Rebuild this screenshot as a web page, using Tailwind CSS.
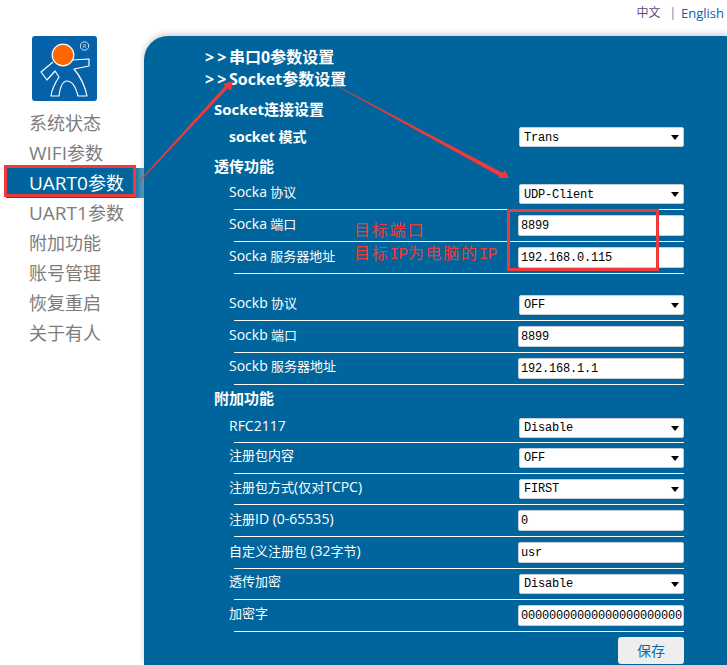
<!DOCTYPE html>
<html lang="zh">
<head>
    <meta charset="UTF-8">
    <title>UART0</title>
    <script src="https://cdn.jsdelivr.net/npm/@tailwindcss/browser@4"></script>
</head>
<body class="bg-white overflow-hidden font-['Open_Sans','Noto_Sans_CJK_SC',sans-serif]">
<div class="relative w-[727px] h-[665px] overflow-hidden">

    <!-- language links -->
    <div class="h-[36px] flex justify-end items-start pt-[5px] pr-[3px] text-[12px] leading-[16px] text-[#0f5fa8]">
        <span class="text-[#5b4a7a]">中文</span>
        <span class="ml-[9px] mr-[5px] text-[#5b7fb0]">|</span>
        <span class="text-[13px]">English</span>
    </div>

    <div class="flex">
        <!-- sidebar -->
        <div class="w-[144px] shrink-0">
            <div class="ml-[32px] w-[65px] h-[65px] rounded-[3px] bg-[#0561a8]">
                <svg viewBox="0 0 65 65" class="w-[65px] h-[65px]" fill="none">
                    <path d="M21 26 L9 36 L15 44 L23 35 L27 41 C23 47 20 52 19 60 L27 60 C28 52 30 45 35 45 C41 45 44 52 46 60 L55 60 C53 50 48 40 42 33 L57 30 L57 23 L40 24" stroke="#fff" stroke-width="1.2" stroke-linejoin="round"/>
                    <circle cx="31" cy="19" r="10.8" fill="#ff6600" stroke="#fff" stroke-width="1.2"/>
                    <circle cx="52.5" cy="10" r="4.2" stroke="#d5e6f5" stroke-width="1"/>
                    <text x="52.5" y="12" font-size="5.5" fill="#d5e6f5" text-anchor="middle">R</text>
                </svg>
            </div>
            <nav class="mt-[7px] text-[18px] leading-[30px] text-[#7d7d7d]">
                <div class="h-[30px] pl-[29px]">系统状态</div>
                <div class="h-[30px] pl-[29px]"><span class="text-[19px]">WIFI</span>参数</div>
                <div class="h-[30px] ml-[6px] pl-[23px] text-white bg-gradient-to-r from-[#00659c] from-[92%] to-[#00659c]/60"><span class="text-[19px]">UART0</span>参数</div>
                <div class="h-[30px] pl-[29px]"><span class="text-[19px]">UART1</span>参数</div>
                <div class="h-[30px] pl-[29px]">附加功能</div>
                <div class="h-[30px] pl-[29px]">账号管理</div>
                <div class="h-[30px] pl-[29px]">恢复重启</div>
                <div class="h-[30px] pl-[29px]">关于有人</div>
            </nav>
        </div>

        <!-- main panel -->
        <div class="w-[583px] h-[629px] bg-[#00659c] rounded-tl-[24px] shadow-[0_-2px_6px_rgba(0,0,0,0.2)] text-white text-[13px] pt-[10px]">
            <div class="pl-[61px] text-[16px] font-bold leading-[23px]">
                <div class="flex h-[22px]"><span class="w-[24px] tracking-[3px]">&gt;&gt;</span>串口0参数设置</div>
                <div class="flex h-[24px]"><span class="w-[24px] tracking-[3px]">&gt;&gt;</span>Socket参数设置</div>
            </div>

            <div class="ml-[70px] mt-[7px] h-[24px] leading-[21px] text-[15px] font-bold">Socket连接设置</div>
            <div class="ml-[90px] w-[450px] h-[28px] flex items-center justify-between">
                <span class="-ml-[5px] -mt-[2px] text-[14px] font-bold">socket 模式</span>
                <div class="relative w-[165px] h-[20px] rounded-[2px] bg-white border border-[#c8ced4] pl-[4px] font-['Liberation_Mono',monospace] text-[12px] leading-[21px] tracking-[-0.2px] text-black">Trans<span class="absolute right-[4px] top-[7px] border-x-[4px] border-t-[5px] border-x-transparent border-t-black"></span></div>
            </div>

            <div class="ml-[70px] mt-[4px] h-[23px] leading-[23px] text-[15px] font-bold">透传功能</div>
            <div class="ml-[90px] w-[450px] h-[32px] flex items-center justify-between border-b border-white">
                <span class="-ml-[5px] -mt-[3px]"><span class="text-[14px]">Socka</span> 协议</span>
                <div class="relative w-[165px] h-[20px] rounded-[2px] bg-white border border-[#c8ced4] pl-[4px] font-['Liberation_Mono',monospace] text-[12px] leading-[21px] tracking-[-0.2px] text-black">UDP-Client<span class="absolute right-[4px] top-[7px] border-x-[4px] border-t-[5px] border-x-transparent border-t-black"></span></div>
            </div>
            <div class="ml-[90px] w-[450px] h-[32px] flex items-center justify-between border-b border-white">
                <span class="-ml-[5px] -mt-[4px]"><span class="text-[14px]">Socka</span> 端口</span>
                <div class="w-[166px] h-[21px] rounded-[2px] bg-white border border-[#c8ced4] pl-[2px] font-['Liberation_Mono',monospace] text-[12px] leading-[21px] tracking-[-0.2px] text-black">8899</div>
            </div>
            <div class="ml-[90px] w-[450px] h-[32px] flex items-center justify-between border-b border-white">
                <span class="-ml-[5px] -mt-[4px]"><span class="text-[14px]">Socka</span> 服务器地址</span>
                <div class="w-[166px] h-[21px] rounded-[2px] bg-white border border-[#c8ced4] pl-[2px] font-['Liberation_Mono',monospace] text-[12px] leading-[21px] tracking-[-0.2px] text-black">192.168.0.115</div>
            </div>

            <div class="h-[15px]"></div>
            <div class="ml-[90px] w-[450px] h-[32px] flex items-center justify-between border-b border-white">
                <span class="-ml-[5px] -mt-[4px]"><span class="text-[14px]">Sockb</span> 协议</span>
                <div class="relative w-[165px] h-[20px] rounded-[2px] bg-white border border-[#c8ced4] pl-[4px] font-['Liberation_Mono',monospace] text-[12px] leading-[19px] tracking-[-0.2px] text-black">OFF<span class="absolute right-[4px] top-[7px] border-x-[4px] border-t-[5px] border-x-transparent border-t-black"></span></div>
            </div>
            <div class="ml-[90px] w-[450px] h-[32px] flex items-center justify-between border-b border-white">
                <span class="-ml-[5px] -mt-[4px]"><span class="text-[14px]">Sockb</span> 端口</span>
                <div class="w-[166px] h-[21px] rounded-[2px] bg-white border border-[#c8ced4] pl-[2px] font-['Liberation_Mono',monospace] text-[12px] leading-[20px] tracking-[-0.2px] text-black">8899</div>
            </div>
            <div class="ml-[90px] w-[450px] h-[32px] flex items-center justify-between border-b border-white">
                <span class="-ml-[5px] -mt-[5px]"><span class="text-[14px]">Sockb</span> 服务器地址</span>
                <div class="w-[166px] h-[21px] rounded-[2px] bg-white border border-[#c8ced4] pl-[2px] font-['Liberation_Mono',monospace] text-[12px] leading-[20px] tracking-[-0.2px] text-black">192.168.1.1</div>
            </div>

            <div class="ml-[70px] mt-[3px] h-[25px] leading-[21px] text-[15px] font-bold">附加功能</div>
            <div class="ml-[90px] w-[450px] h-[30px] flex items-center justify-between border-b border-white">
                <span class="-ml-[5px] -mt-[5px] text-[14px]">RFC2117</span>
                <div class="relative w-[165px] h-[20px] rounded-[2px] bg-white border border-[#c8ced4] pl-[4px] font-['Liberation_Mono',monospace] text-[12px] leading-[18px] tracking-[-0.2px] text-black">Disable<span class="absolute right-[4px] top-[7px] border-x-[4px] border-t-[5px] border-x-transparent border-t-black"></span></div>
            </div>
            <div class="ml-[90px] w-[450px] h-[31px] flex items-center justify-between border-b border-white">
                <span class="-ml-[5px] -mt-[4px]">注册包内容</span>
                <div class="relative w-[165px] h-[20px] rounded-[2px] bg-white border border-[#c8ced4] pl-[4px] font-['Liberation_Mono',monospace] text-[12px] leading-[19px] tracking-[-0.2px] text-black">OFF<span class="absolute right-[4px] top-[7px] border-x-[4px] border-t-[5px] border-x-transparent border-t-black"></span></div>
            </div>
            <div class="ml-[90px] w-[450px] h-[31px] flex items-center justify-between border-b border-white">
                <span class="-ml-[5px] -mt-[4px]">注册包方式<span class="text-[14px]">(</span>仅对<span class="text-[14px]">TCPC)</span></span>
                <div class="relative w-[165px] h-[20px] rounded-[2px] bg-white border border-[#c8ced4] pl-[4px] font-['Liberation_Mono',monospace] text-[12px] leading-[19px] tracking-[-0.2px] text-black">FIRST<span class="absolute right-[4px] top-[7px] border-x-[4px] border-t-[5px] border-x-transparent border-t-black"></span></div>
            </div>
            <div class="ml-[90px] w-[450px] h-[32px] flex items-center justify-between border-b border-white">
                <span class="-ml-[5px] -mt-[4px]">注册<span class="text-[14px]">ID (0-65535)</span></span>
                <div class="w-[166px] h-[21px] rounded-[2px] bg-white border border-[#c8ced4] pl-[2px] font-['Liberation_Mono',monospace] text-[12px] leading-[20px] tracking-[-0.2px] text-black">0</div>
            </div>
            <div class="ml-[90px] w-[450px] h-[32px] flex items-center justify-between border-b border-white">
                <span class="-ml-[5px] -mt-[4px]">自定义注册包 <span class="text-[14px]">(32</span>字节<span class="text-[14px]">)</span></span>
                <div class="w-[166px] h-[21px] rounded-[2px] bg-white border border-[#c8ced4] pl-[2px] font-['Liberation_Mono',monospace] text-[12px] leading-[20px] tracking-[-0.2px] text-black">usr</div>
            </div>
            <div class="ml-[90px] w-[450px] h-[31px] flex items-center justify-between border-b border-white">
                <span class="-ml-[5px] -mt-[4px]">透传加密</span>
                <div class="relative w-[165px] h-[20px] rounded-[2px] bg-white border border-[#c8ced4] pl-[4px] font-['Liberation_Mono',monospace] text-[12px] leading-[19px] tracking-[-0.2px] text-black">Disable<span class="absolute right-[4px] top-[7px] border-x-[4px] border-t-[5px] border-x-transparent border-t-black"></span></div>
            </div>
            <div class="ml-[90px] w-[450px] h-[32px] flex items-center justify-between border-b border-white">
                <span class="-ml-[5px] -mt-[4px]">加密字</span>
                <div class="w-[166px] h-[21px] overflow-hidden whitespace-nowrap rounded-[2px] bg-white border border-[#c8ced4] pl-[2px] font-['Liberation_Mono',monospace] text-[12px] leading-[20px] tracking-[-0.2px] text-black">00000000000000000000000</div>
            </div>
            <div class="ml-[474px] mt-[5px] w-[66px] h-[27px] rounded-[3px] bg-[#eeeeee] text-[#0a6aa8] text-[14px] leading-[27px] text-center">保存</div>
        </div>
    </div>

    <!-- red annotations drawn over the page -->
    <div class="absolute left-[4px] top-[165px] w-[132px] h-[32px] border-[3px] border-[#f03a3a]"></div>
    <div class="absolute left-[507px] top-[209px] w-[152px] h-[62px] border-[3px] border-[#f03a3a]"></div>
    <div class="absolute left-[354px] top-[217px] text-[16px] leading-[24px] text-[#f03a3a] font-['Noto_Sans_CJK_SC',sans-serif] tracking-[1.8px]">
        <div>目标端口</div>
        <div class="-mt-[1px]">目标<span class="font-['Liberation_Mono',monospace] tracking-[-0.6px]">IP</span>为电脑的<span class="font-['Liberation_Mono',monospace] tracking-[-0.6px]">IP</span></div>
    </div>
    <svg class="absolute left-0 top-0 w-[727px] h-[665px] pointer-events-none" viewBox="0 0 727 665" fill="#f03a3a">
        <polygon points="140,180 226,85 228.5,87.5 141,180.5"/>
        <polygon points="233,81 223,84 231,91"/>
        <polygon points="332,83 503,173 501,177 332,83.6"/>
        <polygon points="509,178 498,178 505,170"/>
    </svg>
</div>
</body>
</html>
